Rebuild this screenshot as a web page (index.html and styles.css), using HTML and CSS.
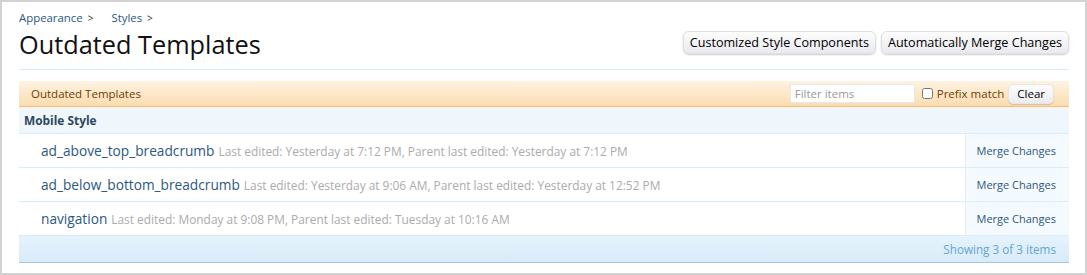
FILE: index.html
```html
<!DOCTYPE html>
<html lang="en">
<head>
    <meta charset="UTF-8">
    <title>Outdated Templates</title>
    <link rel="stylesheet" href="styles.css">
</head>
<body>
    <div class="page">
        <div class="breadcrumb">
            <a href="#">Appearance</a><span class="arrow">&gt;</span>
            <a href="#">Styles</a><span class="arrow">&gt;</span>
        </div>

        <div class="titleBar">
            <h1>Outdated Templates</h1>
            <div class="topCtrl">
                <a class="button" href="#">Customized Style Components</a>
                <a class="button" href="#">Automatically Merge Changes</a>
            </div>
        </div>

        <div class="listBox">
            <div class="listHead">
                <span class="headTitle">Outdated Templates</span>
                <div class="filter">
                    <input type="text" class="filterInput" placeholder="Filter items">
                    <label class="prefix"><input type="checkbox"> Prefix match</label>
                    <button type="button" class="clear">Clear</button>
                </div>
            </div>

            <h3 class="group">Mobile Style</h3>

            <ol class="items">
                <li class="item">
                    <div class="itemMain">
                        <a href="#" class="itemName">ad_above_top_breadcrumb</a>
                        <span class="meta">Last edited: Yesterday at 7:12 PM, Parent last edited: Yesterday at 7:12 PM</span>
                    </div>
                    <a href="#" class="merge">Merge Changes</a>
                </li>
                <li class="item">
                    <div class="itemMain">
                        <a href="#" class="itemName">ad_below_bottom_breadcrumb</a>
                        <span class="meta">Last edited: Yesterday at 9:06 AM, Parent last edited: Yesterday at 12:52 PM</span>
                    </div>
                    <a href="#" class="merge">Merge Changes</a>
                </li>
                <li class="item">
                    <div class="itemMain">
                        <a href="#" class="itemName">navigation</a>
                        <span class="meta">Last edited: Monday at 9:08 PM, Parent last edited: Tuesday at 10:16 AM</span>
                    </div>
                    <a href="#" class="merge">Merge Changes</a>
                </li>
            </ol>

            <div class="listFoot">Showing 3 of 3 items</div>
        </div>
    </div>
</body>
</html>
```

FILE: styles.css
```css
html, body {
    height: 100%;
}
body {
    margin: 0;
    box-sizing: border-box;
    border: 2px solid #d2d2d2;
    background: #fff;
    font-family: "Open Sans", sans-serif;
    font-size: 12px;
    color: #000;
}
a {
    text-decoration: none;
}
.page {
    padding: 8px 16px 0 17px;
}
.breadcrumb {
    height: 16px;
    line-height: 16px;
    font-size: 11.4px;
}
.breadcrumb a {
    color: #2b5880;
}
.arrow {
    color: #333;
    margin: 0 15px 0 5px;
    font-size: 10px;
}
.titleBar {
    display: flex;
    justify-content: space-between;
    align-items: flex-start;
    border-bottom: 1px solid #d7edfc;
    padding-bottom: 6px;
    margin-bottom: 11px;
}
h1 {
    margin: 0;
    font-size: 25.3px;
    font-weight: normal;
    line-height: 37px;
    color: #111;
}
.topCtrl {
    display: flex;
    gap: 5px;
    padding-top: 5px;
}
.button {
    display: block;
    height: 21px;
    line-height: 21px;
    padding: 0 6px;
    border: 1px solid #dfe0e4;
    border-radius: 6px;
    background: linear-gradient(#fdfdfd, #e9eaee);
    box-shadow: 0 1px 2px rgba(0, 0, 0, 0.2);
    color: #000;
    font-size: 12.6px;
}
.listHead {
    display: flex;
    justify-content: space-between;
    align-items: center;
    height: 25px;
    padding: 0 15px 0 12px;
    background: linear-gradient(#fef3e2, #fbdcb0);
    border-bottom: 1px solid #f9bc6d;
    color: #6d3f03;
    font-size: 11.5px;
}
.filter {
    display: flex;
    align-items: center;
}
.filterInput {
    box-sizing: border-box;
    width: 125px;
    height: 19px;
    border: 1px solid #e8e8e8;
    border-radius: 2px;
    padding: 0 4px;
    font-family: inherit;
    font-size: 11.5px;
    margin-right: 7px;
}
.filterInput::placeholder {
    color: #999;
}
.prefix {
    display: flex;
    align-items: center;
    gap: 4px;
    font-size: 11.5px;
    color: #6d3f03;
}
.prefix input {
    margin: 0;
    width: 11px;
    height: 11px;
}
.clear {
    margin-left: 4px;
    height: 20px;
    padding: 0 8px;
    border: 1px solid #e6e6e6;
    border-radius: 5px;
    background: linear-gradient(#fdfdfd, #ececef);
    box-shadow: 0 1px 1px rgba(0, 0, 0, 0.15);
    font-family: inherit;
    font-size: 11.5px;
    color: #000;
}
.group {
    margin: 0;
    height: 26px;
    line-height: 26px;
    padding-left: 5px;
    background: #f0f7fc;
    border-bottom: 1px solid #d7edfc;
    color: #2b485c;
    font-size: 11.9px;
    font-weight: bold;
}
.items {
    list-style: none;
    margin: 0;
    padding: 0;
}
.item {
    display: flex;
    height: 33px;
    border-bottom: 1px solid #d7edfc;
}
.itemMain {
    flex: 1;
    display: flex;
    align-items: center;
    padding-left: 22px;
}
.itemName {
    color: #2b5880;
    font-size: 13.7px;
    margin-right: 4px;
}
.meta {
    color: #ababab;
    font-size: 11.9px;
}
.merge {
    width: 104px;
    box-sizing: border-box;
    display: flex;
    align-items: center;
    justify-content: flex-end;
    padding-right: 13px;
    background: #f5fafe;
    border-left: 1px solid #e3eef7;
    color: #2b5880;
    font-size: 11px;
}
.listFoot {
    height: 26px;
    line-height: 26px;
    padding-right: 13px;
    text-align: right;
    background: linear-gradient(#e5f3fc, #d7ebf9);
    border-bottom: 1px solid #a5cae4;
    color: #65a5d1;
    font-size: 11.7px;
}
```
